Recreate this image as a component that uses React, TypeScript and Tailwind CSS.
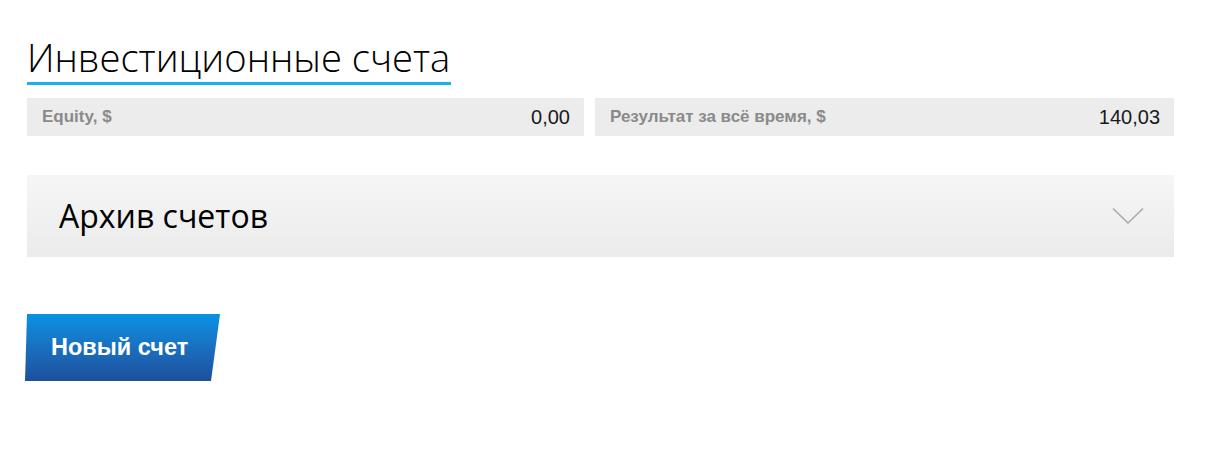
// Инвестиционные счета — сводка, архив и кнопка создания счёта.
const STATS = [
  { label: "Equity, $", value: "0,00" },
  { label: "Результат за всё время, $", value: "140,03" }
] as const;

function Chevron() {
  return (
    <svg width="32" height="18" viewBox="0 0 32 18" fill="none" className="text-[#a9a9a9]">
      <path d="M1 1.5 L16 16 L31 1.5" stroke="currentColor" strokeWidth="1.6" />
    </svg>
  );
}

export default function App() {
  return (
    <div className="min-h-[449px] bg-white font-['Liberation_Sans',Arial,sans-serif]">
      <div className="ml-[27px] w-[1147px] pt-[34px]">
        <h1 className="inline-block border-b-[3px] border-[#18b0ee] pb-[1px] pr-[1px] font-['Open_Sans',sans-serif] text-[38.2px] leading-[47px] font-light text-black">
          Инвестиционные счета
        </h1>

        <div className="mt-[13px] grid grid-cols-[557px_1fr] gap-[11px]">
          {STATS.map((s) => (
            <div
              key={s.label}
              className="flex h-[38px] items-center justify-between bg-[#ececec] pl-[15px] pr-[14px]"
            >
              <span className="text-[17px] font-bold text-[#8a8a8a]">{s.label}</span>
              <span className="text-[20px] text-[#1a1a1a]">{s.value}</span>
            </div>
          ))}
        </div>

        <div className="mt-[39px] flex h-[82px] items-center justify-between bg-gradient-to-b from-[#f6f6f6] to-[#ebebeb] pl-[32px] pr-[30px]">
          <span className="font-['Open_Sans',sans-serif] text-[32px] font-normal text-black">Архив счетов</span>
          <Chevron />
        </div>

        <button
          type="button"
          className="mt-[57px] -ml-[2px] flex h-[67px] w-[195px] items-center bg-gradient-to-b from-[#0592e4] to-[#1d4f9c] pl-[26px] text-[23.5px] font-bold text-white [clip-path:polygon(2px_0,195px_0,186px_100%,0_100%)]"
        >
          Новый счет
        </button>
      </div>
    </div>
  );
}
